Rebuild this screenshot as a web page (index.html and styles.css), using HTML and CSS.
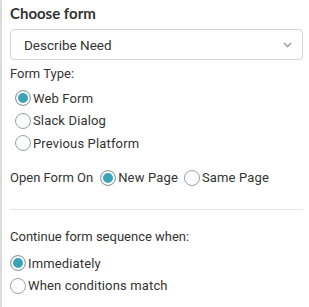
FILE: index.html
```html
<!DOCTYPE html>
<html lang="en">
<head>
    <meta charset="UTF-8">
    <meta name="viewport" content="width=device-width, initial-scale=1.0">
    <title>Choose form</title>
    <link rel="stylesheet" href="styles.css">
</head>
<body>

<div class="panel">
    <h3 class="title">Choose form</h3>

    <div class="select">
        <span class="select-value">Describe Need</span>
        <svg class="chevron" width="9" height="6" viewBox="0 0 9 6">
            <path d="M1 1 L4.5 4.5 L8 1" fill="none" stroke="#a0a4ab" stroke-width="1.6"/>
        </svg>
    </div>

    <div class="label">Form Type:</div>
    <div class="radio-list indent">
        <label class="radio"><span class="dot checked"></span>Web Form</label>
        <label class="radio"><span class="dot"></span>Slack Dialog</label>
        <label class="radio"><span class="dot"></span>Previous Platform</label>
    </div>

    <div class="inline-row">
        <span class="inline-label">Open Form On</span>
        <label class="radio"><span class="dot checked"></span>New Page</label>
        <label class="radio"><span class="dot"></span>Same Page</label>
    </div>

    <hr class="divider">

    <div class="label">Continue form sequence when:</div>
    <div class="radio-list">
        <label class="radio"><span class="dot checked"></span>Immediately</label>
        <label class="radio"><span class="dot"></span>When conditions match</label>
    </div>
</div>

</body>
</html>
```

FILE: styles.css
```css
body {
    margin: 0;
    font-family: Roboto, "Liberation Sans", sans-serif;
    color: #333;
    background-color: #fff;
}

.panel {
    height: 307px;
    box-sizing: border-box;
    border-left: 2px solid #dcdcdc;
    padding: 3px 6px 0 8px;
}

.title {
    font-family: Lato, sans-serif;
    font-size: 15px;
    font-weight: 700;
    line-height: 20px;
    margin: 0 0 6px 0;
    color: #333;
}

.select {
    height: 31px;
    box-sizing: border-box;
    border: 1px solid #d4d4d4;
    border-radius: 4px;
    display: flex;
    align-items: center;
    justify-content: space-between;
    padding: 0 10px 0 13px;
}

.select-value {
    font-size: 13.5px;
}

.chevron {
    display: block;
}

.label {
    font-size: 13px;
    line-height: 16px;
    margin-top: 6px;
}

.radio-list {
    display: flex;
    flex-direction: column;
    margin-top: 5px;
}

.radio-list.indent {
    padding-left: 5px;
}

.radio {
    display: flex;
    align-items: center;
    height: 22.5px;
    font-size: 13px;
    letter-spacing: 0.15px;
}

.dot {
    width: 14px;
    height: 14px;
    border-radius: 50%;
    border: 1px solid #9aa0a6;
    margin-right: 2px;
    flex-shrink: 0;
    box-sizing: content-box;
}

.dot.checked {
    background-color: #3ba3b7;
    box-shadow: inset 0 0 0 2px #fff;
}

.inline-row {
    display: flex;
    align-items: center;
    gap: 6px;
    margin-top: 12px;
}

.inline-label {
    font-size: 13px;
    margin-right: 1px;
}

.divider {
    border: 0;
    border-top: 1px solid #e6e6e6;
    margin: 20px 0 0 0;
}

.panel > .divider + .label {
    margin-top: 19px;
}

.panel > .divider + .label + .radio-list {
    margin-top: 7px;
}
```
